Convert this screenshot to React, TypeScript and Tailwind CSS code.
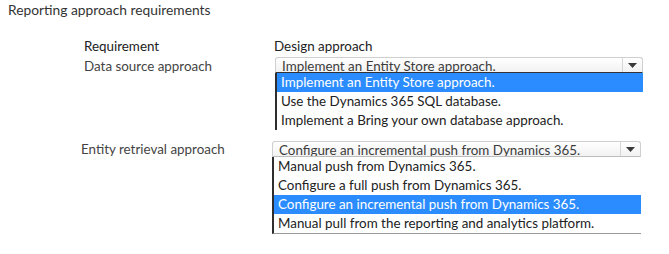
const FONT = "font-['Lato','Noto_Sans',sans-serif]";

function Arrow() {
  return (
    <svg width="9" height="5" viewBox="0 0 9 5" className="block">
      <path d="M0 0 H9 L4.5 5 Z" fill="#3a3a3a" />
    </svg>
  );
}

function SelectBox({ value, dark }: { value: string; dark?: boolean }) {
  return (
    <div
      className={`flex h-[16px] rounded-t-[3px] border border-[#cfcfcf] bg-gradient-to-b from-white to-[#f2f2f2] ${
        dark ? "border-b-[#333]" : "border-b-[#bdbdbd]"
      }`}
    >
      <div className="flex-1 overflow-hidden whitespace-nowrap pl-[6px] text-[13.4px] leading-[17px] text-[#3c3c3c]">
        {value}
      </div>
      <div className="flex w-[20px] items-center justify-center border-l border-[#d6d6d6]">
        <Arrow />
      </div>
    </div>
  );
}

function OptionList({
  options,
  selected,
  bottomLine,
}: {
  options: string[];
  selected: number;
  bottomLine?: boolean;
}) {
  return (
    <div
      className={`border-l-2 border-[#2e2e2e] ${
        bottomLine ? "border-b border-b-[#9a9a9a]" : ""
      }`}
    >
      {options.map((o, i) => (
        <div
          key={o}
          className={`h-[19px] whitespace-nowrap pl-[4px] text-[13.4px] leading-[19px] ${
            i === selected ? "bg-[#2b8cff] text-white" : "text-[#222]"
          }`}
        >
          {o}
        </div>
      ))}
    </div>
  );
}

export default function App() {
  return (
    <div className={`h-[254px] w-[669px] overflow-hidden bg-white ${FONT}`}>
      <div className="pl-[8px] pt-[2px] text-[13.8px] leading-[16px] text-[#333]">
        Reporting approach requirements
      </div>

      <div className="mt-[20px] flex text-[13.4px] leading-[16px] text-[#222]">
        <div className="w-[274px] pl-[84px]">Requirement</div>
        <div>Design approach</div>
      </div>

      <div className="mt-[3px] flex">
        <div className="w-[275px] pl-[84px] pt-[1px] text-[13.4px] leading-[16px] text-[#444]">
          Data source approach
        </div>
        <div className="w-[368px]">
          <SelectBox value="Implement an Entity Store approach." dark />
          <OptionList
            selected={0}
            options={[
              "Implement an Entity Store approach.",
              "Use the Dynamics 365 SQL database.",
              "Implement a Bring your own database approach.",
            ]}
          />
        </div>
      </div>

      <div className="mt-[11px] flex">
        <div className="w-[272px] pl-[81px] text-[13.4px] leading-[16px] text-[#444]">
          Entity retrieval approach
        </div>
        <div className="w-[369px]">
          <SelectBox value="Configure an incremental push from Dynamics 365." />
          <OptionList
            selected={2}
            bottomLine
            options={[
              "Manual push from Dynamics 365.",
              "Configure a full push from Dynamics 365.",
              "Configure an incremental push from Dynamics 365.",
              "Manual pull from the reporting and analytics platform.",
            ]}
          />
        </div>
      </div>
    </div>
  );
}
